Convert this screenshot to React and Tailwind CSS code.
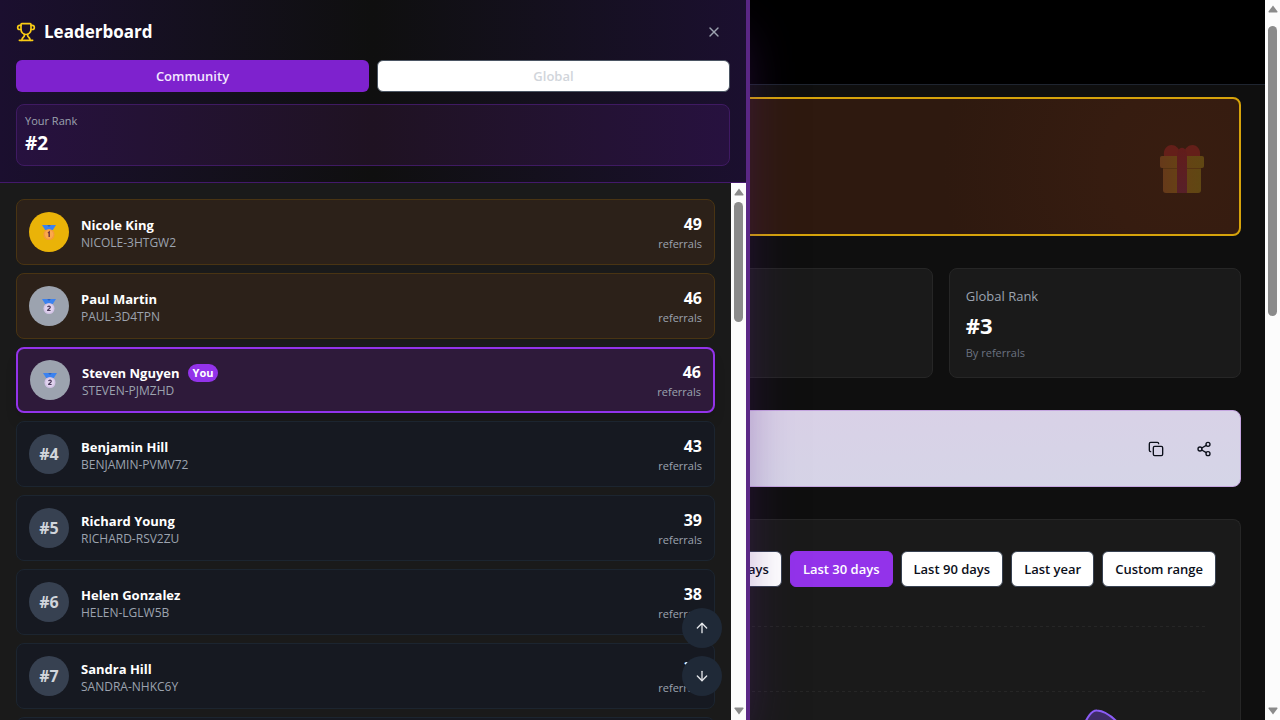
import React from "react";
import { Trophy, X, ArrowUp, ArrowDown, Copy, Share2 } from "lucide-react";

const entries = [
  { id: 1, rank: 1, name: "Nicole King", code: "NICOLE-3HTGW2", count: 49 },
  { id: 2, rank: 2, name: "Paul Martin", code: "PAUL-3D4TPN", count: 46 },
  { id: 3, rank: 2, name: "Steven Nguyen", code: "STEVEN-PJMZHD", count: 46, you: true },
  { id: 4, rank: 4, name: "Benjamin Hill", code: "BENJAMIN-PVMV72", count: 43 },
  { id: 5, rank: 5, name: "Richard Young", code: "RICHARD-RSV2ZU", count: 39 },
  { id: 6, rank: 6, name: "Helen Gonzalez", code: "HELEN-LGLW5B", count: 38 },
  { id: 7, rank: 7, name: "Sandra Hill", code: "SANDRA-NHKC6Y", count: 37 },
];

const ranges = ["Last 7 days", "Last 30 days", "Last 90 days", "Last year", "Custom range"];

function Medal({ place }) {
  const gold = place === 1;
  return (
    <svg viewBox="0 0 16 17" className="h-[17px] w-4" aria-label={gold ? "Gold medal" : "Silver medal"}>
      <path d="M1 1h5.2l1.8 1.6L9.800 1H15l-3.200 5H4.200z" fill="#3b82f0" />
      <path d="M6 1l2 2 2-2z" fill="#2563c9" />
      <circle cx="8" cy="10.500" r="5.500" fill={gold ? "#f59a3c" : "#d3c3e6"} />
      <circle cx="8" cy="10.500" r="4.200" fill={gold ? "#fba94c" : "#e0d3ee"} />
      {gold ? (
        <path d="M7 9l1.200-1v5" fill="none" stroke="#6b3340" strokeWidth="1.400" />
      ) : (
        <path d="M6.600 9.200c.2-1.400 2.700-1.400 2.700.1 0 1.200-2.600 2-2.700 3.200h3" fill="none" stroke="#4b3a5c" strokeWidth="1.200" />
      )}
    </svg>
  );
}

function Gift() {
  return (
    <svg viewBox="0 0 46 50" className="h-[50px] w-[46px]" aria-hidden="true">
      <defs>
        <linearGradient id="box" x1="0" x2="1">
          <stop offset="0" stopColor="#66391a" />
          <stop offset="0.450" stopColor="#664214" />
          <stop offset="1" stopColor="#604713" />
        </linearGradient>
        <linearGradient id="ribbon" x1="0" x2="0" y1="0" y2="1">
          <stop offset="0" stopColor="#621c1a" />
          <stop offset="1" stopColor="#572029" />
        </linearGradient>
      </defs>
      <rect x="4" y="12" width="38" height="37" rx="3" fill="url(#box)" />
      <rect x="1" y="12" width="44" height="12" rx="2" fill="url(#box)" />
      <path d="M4 24.500h38" stroke="#553312" strokeWidth="1" />
      <path d="M5 12c-1-7 3-11 7.500-11 4 0 7 3 8 6 2-1 3.500-1 5 0 1-3 4-6 8-6C38 1 42 5 41 12z" fill="#641f19" />
      <path d="M18 12c0-11 10-11 10 0v37H18z" fill="url(#ribbon)" />
    </svg>
  );
}

function ScrollTrack({ thumb }) {
  return (
    <div className="flex w-[15px] shrink-0 flex-col items-center bg-[#fcfcfc] py-[5px]" aria-hidden="true">
      <svg viewBox="0 0 10 8" className="h-2 w-[10px] shrink-0">
        <path d="M5 .5L9.500 6.500a.8.8 0 0 1-.6 1H1.100a.8.8 0 0 1-.6-1z" fill="#8b8b8b" />
      </svg>
      <div className="flex w-full flex-1 justify-center pt-[6px]">
        <div className={"w-[9px] rounded-full bg-[#8b8b8b] " + thumb} />
      </div>
      <svg viewBox="0 0 10 8" className="h-2 w-[10px] shrink-0">
        <path d="M5 7.500L9.500 1.500a.8.8 0 0 0-.6-1H1.100a.8.8 0 0 0-.6 1z" fill="#8b8b8b" />
      </svg>
    </div>
  );
}

function Avatar({ rank }) {
  const tone =
    rank === 1 ? "bg-[#eab308]" : rank === 2 ? "bg-[#9ca3af]" : "bg-[#374151]";
  return (
    <div className={"flex size-10 shrink-0 items-center justify-center rounded-full text-base font-bold text-[#d1d5db] " + tone}>
      {rank <= 2 ? <Medal place={rank} /> : "#" + rank}
    </div>
  );
}

function Row({ entry }) {
  const tone = entry.you
    ? "border-2 border-[#9333ea] bg-[#2e1a3a] shadow-lg"
    : entry.rank <= 3
      ? "border border-[#493413] bg-[#2c2119]"
      : "border border-[#1c2530] bg-[#161921]";
  return (
    <li className={"flex h-[66px] shrink-0 items-center gap-3 rounded-lg px-3 " + tone}>
      <Avatar rank={entry.rank} />
      <div className="min-w-0 flex-1 pt-[2px]">
        <div className="flex items-center gap-2">
          <span className="text-[13px] leading-5 font-bold text-white">{entry.name}</span>
          {entry.you && (
            <span className="rounded-full bg-[#9333ea] px-[5px] text-[11px] leading-[18px] font-bold text-white">You</span>
          )}
        </div>
        <p className="text-xs leading-4 text-[#9ca3af]">{entry.code}</p>
      </div>
      <div className="text-right">
        <p className="text-base leading-6 font-bold text-white">{entry.count}</p>
        <p className="text-[11px] leading-4 text-[#9ca3af]">referrals</p>
      </div>
    </li>
  );
}

function Drawer() {
  return (
    <aside className="absolute inset-y-0 left-0 z-10 flex w-[750px] max-w-full flex-col border-r-4 border-[#5a2785] bg-[#1a1a1a] shadow-[0_25px_50px_-12px_rgba(88,28,135,0.5)]">
      <header className="border-b border-[#43196b] bg-linear-to-r from-[#1b0f2f] via-[#0f0f0f] to-[#1b0f2f] px-4 pt-4 pb-4">
        <div className="flex h-8 items-center justify-between">
          <h2 className="flex items-center gap-2 text-[17px] font-bold text-white">
            <Trophy className="size-5 text-[#facc15]" />
            Leaderboard
          </h2>
          <button type="button" aria-label="Close" className="flex size-8 items-center justify-center text-[#9ca3af]">
            <X className="size-4" />
          </button>
        </div>
        <div className="mt-3 grid grid-cols-2 gap-2">
          <button type="button" className="h-8 rounded-md bg-[#7e22ce] pt-[2px] text-[13px] font-semibold text-[#f3e8ff]">Community</button>
          <button type="button" className="h-8 rounded-md border border-[#4b5563] bg-white pt-[2px] text-[13px] font-semibold text-[#d1d5db]">Global</button>
        </div>
        <div className="mt-3 h-[62px] rounded-lg border border-[#3f1a62] bg-linear-to-r from-[#27113f] via-[#1f1222] to-[#27113f] px-2 pt-2">
          <p className="text-[11px] leading-4 text-[#9ca3af]">Your Rank</p>
          <p className="text-[19px] leading-7 font-bold text-white">#2</p>
        </div>
      </header>
      <div className="flex min-h-0 flex-1">
        <ul className="flex min-w-0 flex-1 flex-col gap-2 overflow-hidden p-4">
          {entries.map((e) => (
            <Row key={e.id} entry={e} />
          ))}
          <li className="h-[66px] shrink-0 rounded-lg border border-[#1c2530] bg-[#161921]" />
        </ul>
        <ScrollTrack thumb="h-[120px]" />
      </div>
      <div className="absolute right-6 bottom-6 flex flex-col gap-2">
        <button type="button" aria-label="Scroll up" className="flex size-10 items-center justify-center rounded-full bg-[#1f2937] text-[#e5e7eb]">
          <ArrowUp className="size-4" />
        </button>
        <button type="button" aria-label="Scroll down" className="flex size-10 items-center justify-center rounded-full bg-[#1f2937] text-[#e5e7eb]">
          <ArrowDown className="size-4" />
        </button>
      </div>
    </aside>
  );
}

export default function App() {
  return (
    <div className="relative flex h-screen overflow-hidden bg-[#0f0f0f] font-['Open_Sans','Noto_Sans',sans-serif]">
      <div className="flex min-w-0 flex-1 flex-col">
        <header className="h-[85px] shrink-0 border-b border-[#1f2530] bg-black" />
        <main className="flex min-h-0 flex-1 flex-col gap-8 overflow-hidden px-6 pt-3">
          <section className="flex h-[139px] shrink-0 items-center justify-end rounded-lg border-2 border-[#d6a30b] bg-[radial-gradient(circle_at_calc(100%_-_56px)_50%,#381d10_0,#361c10_80px,#2e190f_240px)] px-[34px] pt-1">
            <Gift />
          </section>
          <section className="grid h-[110px] shrink-0 grid-cols-4 gap-4">
            <div className="rounded-lg border border-[#262626] bg-[#1a1a1a]" />
            <div className="rounded-lg border border-[#262626] bg-[#1a1a1a]" />
            <div className="rounded-lg border border-[#262626] bg-[#1a1a1a]" />
            <div className="rounded-lg border border-[#262626] bg-[#1a1a1a] px-4 pt-4">
              <p className="text-[13px] leading-[22px] text-[#9ca3af]">Global Rank</p>
              <p className="text-[22px] leading-9 font-bold text-white">#3</p>
              <p className="text-[11px] leading-5 text-[#6b7280]">By referrals</p>
            </div>
          </section>
          <section className="flex h-[77px] shrink-0 items-center justify-end gap-2 rounded-lg border border-[#c4a5e0] bg-linear-to-br from-[#dbcfe7] to-[#d5d5e7] px-4">
            <button type="button" aria-label="Copy" className="flex size-10 items-center justify-center text-[#0b0f1a]">
              <Copy className="size-4" />
            </button>
            <button type="button" aria-label="Share" className="flex size-10 items-center justify-center text-[#0b0f1a]">
              <Share2 className="size-4" />
            </button>
          </section>
          <section className="flex min-h-0 flex-1 flex-col overflow-hidden rounded-t-lg border border-b-0 border-[#262626] bg-[#1a1a1a] px-6 pt-[31px]">
            <div className="flex justify-end gap-2">
              {ranges.map((r) => (
                <button
                  key={r}
                  type="button"
                  className={
                    "h-9 rounded-md border px-3 pt-[2px] text-[13px] font-semibold whitespace-nowrap " +
                    (r === "Last 30 days"
                      ? "border-[#9333ea] bg-[#9333ea] text-white"
                      : "border-[#374151] bg-white text-[#0b0f1a]")
                  }
                >
                  {r}
                </button>
              ))}
            </div>
            <div className="mt-6 flex justify-end pr-2">
              <svg viewBox="0 0 600 110" className="h-[110px] w-[600px]" aria-label="Referrals chart">
                <path d="M0 15.500H600M0 80.500H600" stroke="#262626" strokeDasharray="3 3" fill="none" />
                <path d="M472 122C480 104 484 99 489 99.500C497 100 504 105 512 114L518 122z" fill="#3f2c66" />
                <path d="M472 122C480 104 484 99 489 99.500C497 100 504 105 512 114L518 122" fill="none" stroke="#8b5cf6" strokeWidth="2" />
              </svg>
            </div>
          </section>
        </main>
      </div>
      <ScrollTrack thumb="mt-[7px] h-[290px]" />
      <Drawer />
    </div>
  );
}
